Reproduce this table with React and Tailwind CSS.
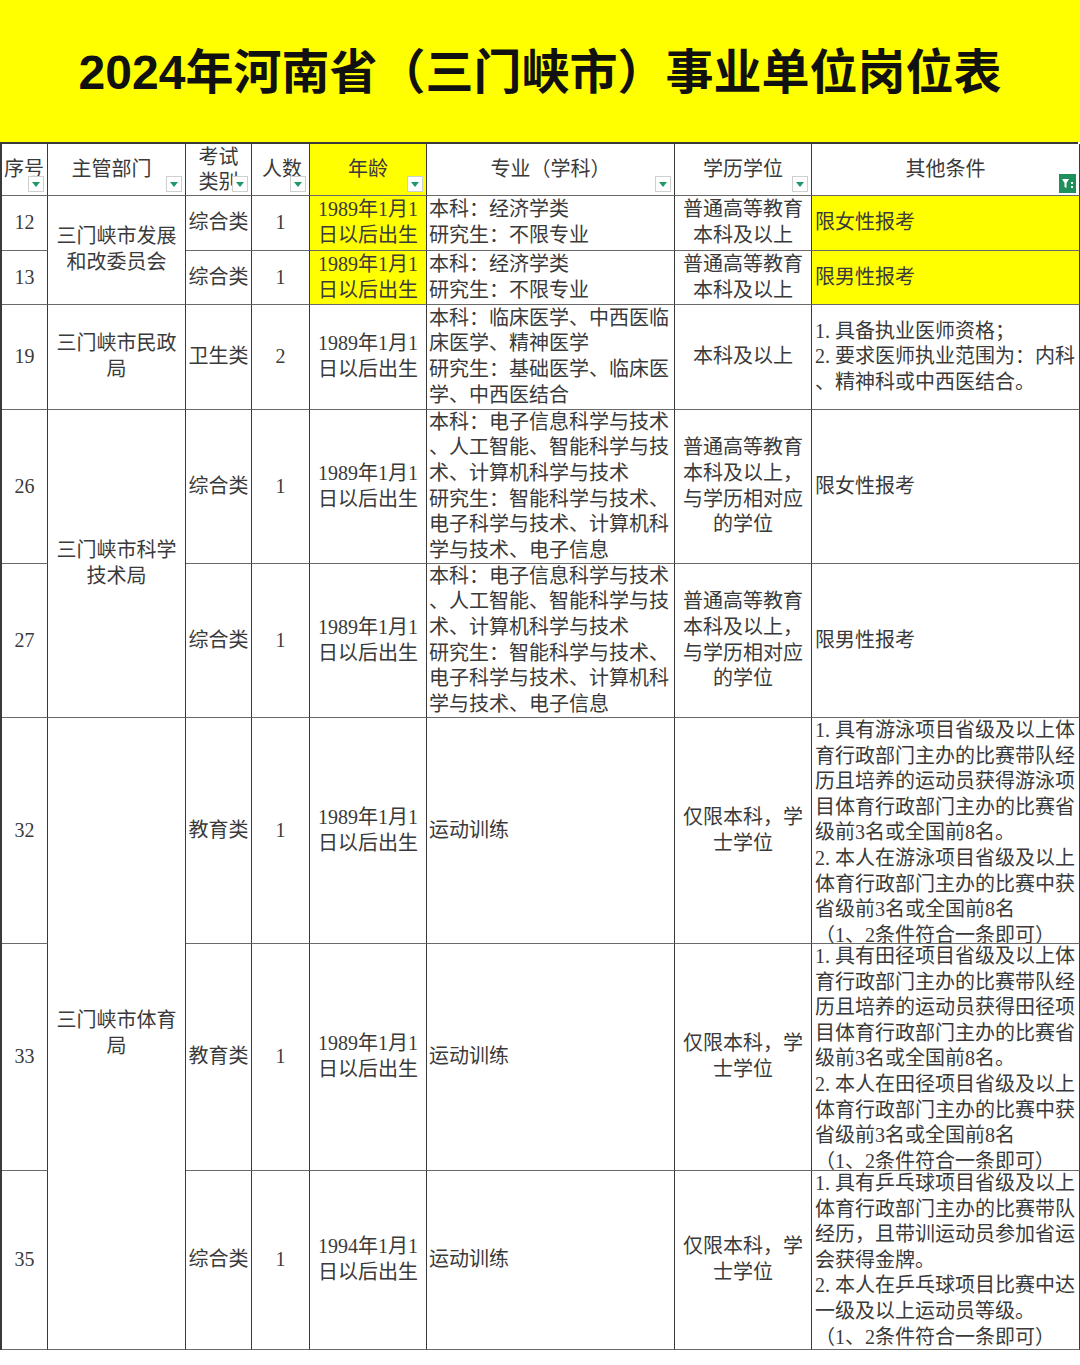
import React from "react";

const rows = [
  {
    no: "12",
    dept: { lines: ["三门峡市发展", "和改委员会"], span: "row-span-2" },
    type: "综合类",
    count: "1",
    age: ["1989年1月1", "日以后出生"],
    ageHi: true,
    major: ["本科：经济学类", "研究生：不限专业"],
    edu: ["普通高等教育", "本科及以上"],
    other: ["限女性报考"],
    otherHi: true,
  },
  {
    no: "13",
    type: "综合类",
    count: "1",
    age: ["1989年1月1", "日以后出生"],
    ageHi: true,
    major: ["本科：经济学类", "研究生：不限专业"],
    edu: ["普通高等教育", "本科及以上"],
    other: ["限男性报考"],
    otherHi: true,
  },
  {
    no: "19",
    dept: { lines: ["三门峡市民政", "局"] },
    type: "卫生类",
    count: "2",
    age: ["1989年1月1", "日以后出生"],
    major: ["本科：临床医学、中西医临", "床医学、精神医学", "研究生：基础医学、临床医", "学、中西医结合"],
    edu: ["本科及以上"],
    other: ["1. 具备执业医师资格；", "2. 要求医师执业范围为：内科", "、精神科或中西医结合。"],
  },
  {
    no: "26",
    dept: { lines: ["三门峡市科学", "技术局"], span: "row-span-2" },
    type: "综合类",
    count: "1",
    age: ["1989年1月1", "日以后出生"],
    major: ["本科：电子信息科学与技术", "、人工智能、智能科学与技", "术、计算机科学与技术", "研究生：智能科学与技术、", "电子科学与技术、计算机科", "学与技术、电子信息"],
    edu: ["普通高等教育", "本科及以上，", "与学历相对应", "的学位"],
    other: ["限女性报考"],
  },
  {
    no: "27",
    type: "综合类",
    count: "1",
    age: ["1989年1月1", "日以后出生"],
    major: ["本科：电子信息科学与技术", "、人工智能、智能科学与技", "术、计算机科学与技术", "研究生：智能科学与技术、", "电子科学与技术、计算机科", "学与技术、电子信息"],
    edu: ["普通高等教育", "本科及以上，", "与学历相对应", "的学位"],
    other: ["限男性报考"],
  },
  {
    no: "32",
    dept: { lines: ["三门峡市体育", "局"], span: "row-span-3" },
    type: "教育类",
    count: "1",
    age: ["1989年1月1", "日以后出生"],
    major: ["运动训练"],
    edu: ["仅限本科，学", "士学位"],
    other: ["1. 具有游泳项目省级及以上体", "育行政部门主办的比赛带队经", "历且培养的运动员获得游泳项", "目体育行政部门主办的比赛省", "级前3名或全国前8名。", "2. 本人在游泳项目省级及以上", "体育行政部门主办的比赛中获", "省级前3名或全国前8名", "（1、2条件符合一条即可）"],
    overflow: true,
  },
  {
    no: "33",
    type: "教育类",
    count: "1",
    age: ["1989年1月1", "日以后出生"],
    major: ["运动训练"],
    edu: ["仅限本科，学", "士学位"],
    other: ["1. 具有田径项目省级及以上体", "育行政部门主办的比赛带队经", "历且培养的运动员获得田径项", "目体育行政部门主办的比赛省", "级前3名或全国前8名。", "2. 本人在田径项目省级及以上", "体育行政部门主办的比赛中获", "省级前3名或全国前8名", "（1、2条件符合一条即可）"],
    overflow: true,
  },
  {
    no: "35",
    type: "综合类",
    count: "1",
    age: ["1994年1月1", "日以后出生"],
    major: ["运动训练"],
    edu: ["仅限本科，学", "士学位"],
    other: ["1. 具有乒乓球项目省级及以上", "体育行政部门主办的比赛带队", "经历，且带训运动员参加省运", "会获得金牌。", "2. 本人在乒乓球项目比赛中达", "一级及以上运动员等级。", "（1、2条件符合一条即可）"],
    overflow: true,
  },
];

function Lines({ lines }) {
  return lines.map((line, i) => (
    <div key={i} className="whitespace-nowrap">{line}</div>
  ));
}

function Cell({ children, className = "" }) {
  return (
    <div className={`relative flex overflow-hidden border-r-[1.5px] border-b-[1.5px] border-r-[#3a3a3a] border-b-[#6a6a6a] ${className}`}>
      {children}
    </div>
  );
}

function FilterButton() {
  return (
    <span className="absolute right-[3px] bottom-[3px] flex h-[16px] w-[16px] items-center justify-center border border-[#cfcfcf] bg-white">
      <span className="h-0 w-0 border-t-[5px] border-r-[4px] border-l-[4px] border-t-[#1f9a66] border-r-transparent border-l-transparent" />
    </span>
  );
}

function ActiveFilter() {
  return (
    <span className="absolute right-[3px] bottom-[2px] flex h-[19px] w-[17px] items-center justify-center bg-[#1f8f5c]">
      <svg width="13" height="13" viewBox="0 0 13 13">
        <path d="M1 2h7L5.5 6v5L3.5 10V6z" fill="white" />
        <rect x="10" y="5" width="2" height="2" fill="white" />
        <rect x="10" y="9" width="2" height="2" fill="white" />
      </svg>
    </span>
  );
}

export default function App() {
  return (
    <div className="w-[1080px] h-[1365px] bg-white text-[#3a3a3a] font-['Liberation_Serif','Noto_Sans_CJK_SC',serif]">
      <div className="flex h-[142px] items-center justify-center bg-[#ffff00] pt-[4px]">
        <h1 className="text-[48px] font-bold leading-none text-[#111] font-['Liberation_Sans_Narrow','Liberation_Sans','Noto_Sans_CJK_SC',sans-serif]">
          2024年河南省（三门峡市）事业单位岗位表
        </h1>
      </div>

      <div className="grid w-[1078px] grid-cols-[46px_138px_66px_58px_117px_248px_137px_268px] grid-rows-[52px_55px_54px_105px_154px_154px_226px_227px_179px] border-t-2 border-l-2 border-[#3a3a3a] text-[20px] leading-[25.6px]">
        {/* header */}
        <Cell className="items-center pl-[2px]">
          序号
          <FilterButton />
        </Cell>
        <Cell className="items-center justify-center">
          <span className="-ml-[10px]">主管部门</span>
          <FilterButton />
        </Cell>
        <Cell className="flex-col items-center justify-center leading-[25px]">
          <div>考试</div>
          <div>类别</div>
          <FilterButton />
        </Cell>
        <Cell className="items-center pl-[10px]">
          人数
          <FilterButton />
        </Cell>
        <Cell className="items-center justify-center bg-[#ffff00]">
          年龄
          <FilterButton />
        </Cell>
        <Cell className="items-center justify-center">
          专业（学科）
          <FilterButton />
        </Cell>
        <Cell className="items-center justify-center">
          学历学位
          <FilterButton />
        </Cell>
        <Cell className="items-center justify-center">
          其他条件
          <ActiveFilter />
        </Cell>

        {rows.map((r) => (
          <React.Fragment key={r.no}>
            <Cell className="items-center justify-center">{r.no}</Cell>
            {r.dept && (
              <Cell className={`flex-col items-center justify-center text-center ${r.dept.span || ""}`}>
                <Lines lines={r.dept.lines} />
              </Cell>
            )}
            <Cell className="items-center justify-center">{r.type}</Cell>
            <Cell className="items-center justify-center">{r.count}</Cell>
            <Cell className={`flex-col items-center justify-center text-center ${r.ageHi ? "bg-[#ffff00]" : ""}`}>
              <Lines lines={r.age} />
            </Cell>
            <Cell className="flex-col justify-center pl-[2px]">
              <Lines lines={r.major} />
            </Cell>
            <Cell className="flex-col items-center justify-center text-center">
              <Lines lines={r.edu} />
            </Cell>
            <Cell className={`flex-col pl-[3px] ${r.overflow ? "justify-start" : "justify-center"} ${r.otherHi ? "bg-[#ffff00]" : ""}`}>
              <Lines lines={r.other} />
            </Cell>
          </React.Fragment>
        ))}
      </div>
    </div>
  );
}
